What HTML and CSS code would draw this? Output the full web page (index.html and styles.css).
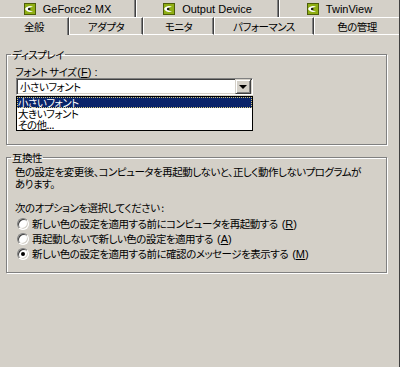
FILE: index.html
```html
<!DOCTYPE html>
<html>
<head>
    <title>画面のプロパティ</title>
    <link rel="stylesheet" href="styles.css">
</head>
<body>
    <div class="window">
        <div class="tab-row top">
            <div class="tab w1">
                <svg class="nv" width="12" height="12" viewBox="0 0 12 12"><rect x="0.5" y="0.5" width="11" height="11" fill="#8fae14" stroke="#4d5e08"/><path d="M1 6 C3 2.5 7 2.5 9 4 C7 3.6 5 4.5 4.5 6 C5 7.5 7 8.4 9 8 C7 9.5 3 9.5 1 6 Z" fill="#fff"/><circle cx="5.2" cy="6" r="1.3" fill="#1a1a1a"/></svg>
                <span>GeForce2 MX</span>
            </div>
            <div class="tab w2">
                <svg class="nv" width="12" height="12" viewBox="0 0 12 12"><rect x="0.5" y="0.5" width="11" height="11" fill="#8fae14" stroke="#4d5e08"/><path d="M1 6 C3 2.5 7 2.5 9 4 C7 3.6 5 4.5 4.5 6 C5 7.5 7 8.4 9 8 C7 9.5 3 9.5 1 6 Z" fill="#fff"/><circle cx="5.2" cy="6" r="1.3" fill="#1a1a1a"/></svg>
                <span>Output Device</span>
            </div>
            <div class="tab w3">
                <svg class="nv" width="12" height="12" viewBox="0 0 12 12"><rect x="0.5" y="0.5" width="11" height="11" fill="#8fae14" stroke="#4d5e08"/><path d="M1 6 C3 2.5 7 2.5 9 4 C7 3.6 5 4.5 4.5 6 C5 7.5 7 8.4 9 8 C7 9.5 3 9.5 1 6 Z" fill="#fff"/><circle cx="5.2" cy="6" r="1.3" fill="#1a1a1a"/></svg>
                <span>TwinView</span>
            </div>
        </div>
        <div class="tab-row bottom">
            <div class="tab selected w4">全般</div>
            <div class="tab w5">アダプタ</div>
            <div class="tab w6">モニタ</div>
            <div class="tab w7">パフォーマンス</div>
            <div class="tab w8">色の管理</div>
        </div>

        <div class="panel">
            <fieldset class="group first">
                <legend>ディスプレイ</legend>
                <div class="label">フォント サイズ<span class="key">(<u>F</u>) :</span></div>
                <div class="combo">
                    <span class="combo-text">小さいフォント</span>
                    <span class="combo-btn"><span class="arrow"></span></span>
                </div>
                <div class="list">
                    <div class="item hl">小さいフォント</div>
                    <div class="item">大きいフォント</div>
                    <div class="item">その他...</div>
                </div>
            </fieldset>

            <fieldset class="group second">
                <legend>互換性</legend>
                <p class="desc">色の設定を変更後、コンピュータを再起動しないと、正しく動作しないプログラムが<br>あります。</p>
                <p class="prompt">次のオプションを選択してください :</p>
                <div class="radio"><span class="dot"></span>新しい色の設定を適用する前にコンピュータを再起動する<span class="key">(<u>R</u>)</span></div>
                <div class="radio"><span class="dot"></span>再起動しないで新しい色の設定を適用する<span class="key">(<u>A</u>)</span></div>
                <div class="radio"><span class="dot on"></span>新しい色の設定を適用する前に確認のメッセージを表示する<span class="key">(<u>M</u>)</span></div>
            </fieldset>
        </div>
    </div>
</body>
</html>
```

FILE: styles.css
```css
body { margin: 0; background: #d4d0c8; font-family: "Noto Sans CJK JP", "Liberation Sans", sans-serif; font-size: 10.5px; letter-spacing: -0.5px; color: #000; font-feature-settings: "palt"; }
.window { width: 400px; height: 367px; display: flex; flex-direction: column; border-right: 1px solid #404040; box-sizing: border-box; overflow: hidden; }

.tab-row { display: flex; }
.tab-row.top { height: 17px; }
.tab-row.bottom { height: 18px; }
.tab { display: flex; align-items: center; justify-content: center; gap: 7px; box-sizing: border-box; border-left: 1px solid #fff; border-right: 1px solid #404040; box-shadow: inset -1px 0 #808080; }
.tab-row.top .tab { font-family: "Liberation Sans", sans-serif; font-size: 11px; letter-spacing: 0; }
.tab-row.bottom .tab { border-top: 1px solid #fff; border-bottom: 1px solid #fff; }
.tab-row.bottom .tab.selected { border-bottom: none; border-left: none; }
.nv { display: block; }
.w1 { width: 136px; border-left: none; }
.w2 { width: 143px; }
.w3 { flex: 1; border-right: none; box-shadow: none; }
.w4 { width: 69px; }
.w5 { width: 74px; }
.w6 { width: 71px; }
.w7 { width: 100px; }
.w8 { flex: 1; border-right: none; box-shadow: none; }

.key { font-family: "Liberation Sans", sans-serif; font-size: 11px; letter-spacing: 0; margin-left: 1px; }

.panel { flex: 1; display: flex; flex-direction: column; padding: 13px 12px 0 6px; }
.group { margin: 0; border: 1px solid #808080; box-shadow: inset 1px 1px 0 #fff, 1px 1px 0 #fff; padding: 4px 8px 13px 8px; }
.group legend { margin-left: -4px; padding: 0 1px; line-height: 13px; }
.group.second { margin-top: 6px; padding: 2px 8px 11px 8px; }

.label { line-height: 13px; height: 13px; }
.combo { width: 237px; height: 17px; margin-left: 1px; box-sizing: border-box; background: #fff; border: 1px solid; border-color: #808080 #fff #fff #808080; box-shadow: inset 1px 1px 0 #404040, inset -1px -1px 0 #d4d0c8; display: flex; align-items: center; justify-content: space-between; padding: 1px; }
.combo-text { padding-left: 2px; line-height: 13px; }
.combo-btn { width: 16px; height: 15px; box-sizing: border-box; background: #d4d0c8; border: 1px solid; border-color: #d4d0c8 #404040 #404040 #d4d0c8; box-shadow: inset 1px 1px 0 #fff, inset -1px -1px 0 #808080; display: flex; align-items: center; justify-content: center; }
.arrow { width: 0; height: 0; border-left: 4px solid transparent; border-right: 4px solid transparent; border-top: 4px solid #000; }

.list { width: 237px; margin: 1px 0 0 1px; box-sizing: border-box; border: 1px solid #000; background: #fff; height: 35px; }
.item { height: 11px; line-height: 11px; padding-left: 1px; box-sizing: border-box; }
.item.hl { background: #0a246a; color: #fff; outline: 1px dotted #d4c87a; outline-offset: -1px; }

.desc { margin: 0; line-height: 12px; white-space: nowrap; }
.prompt { margin: 12px 0 2px 0; line-height: 12px; }
.radio { height: 15px; display: flex; align-items: center; gap: 3px; padding-left: 2px; white-space: nowrap; }
.dot { width: 12px; height: 12px; box-sizing: border-box; border-radius: 50%; background: #fff; border: 1px solid; border-color: #808080 #fff #fff #808080; box-shadow: inset 1px 1px 0 #404040, inset -1px -1px 0 #d4d0c8; display: flex; align-items: center; justify-content: center; }
.dot.on::after { content: ""; width: 4px; height: 4px; border-radius: 50%; background: #000; }
```
